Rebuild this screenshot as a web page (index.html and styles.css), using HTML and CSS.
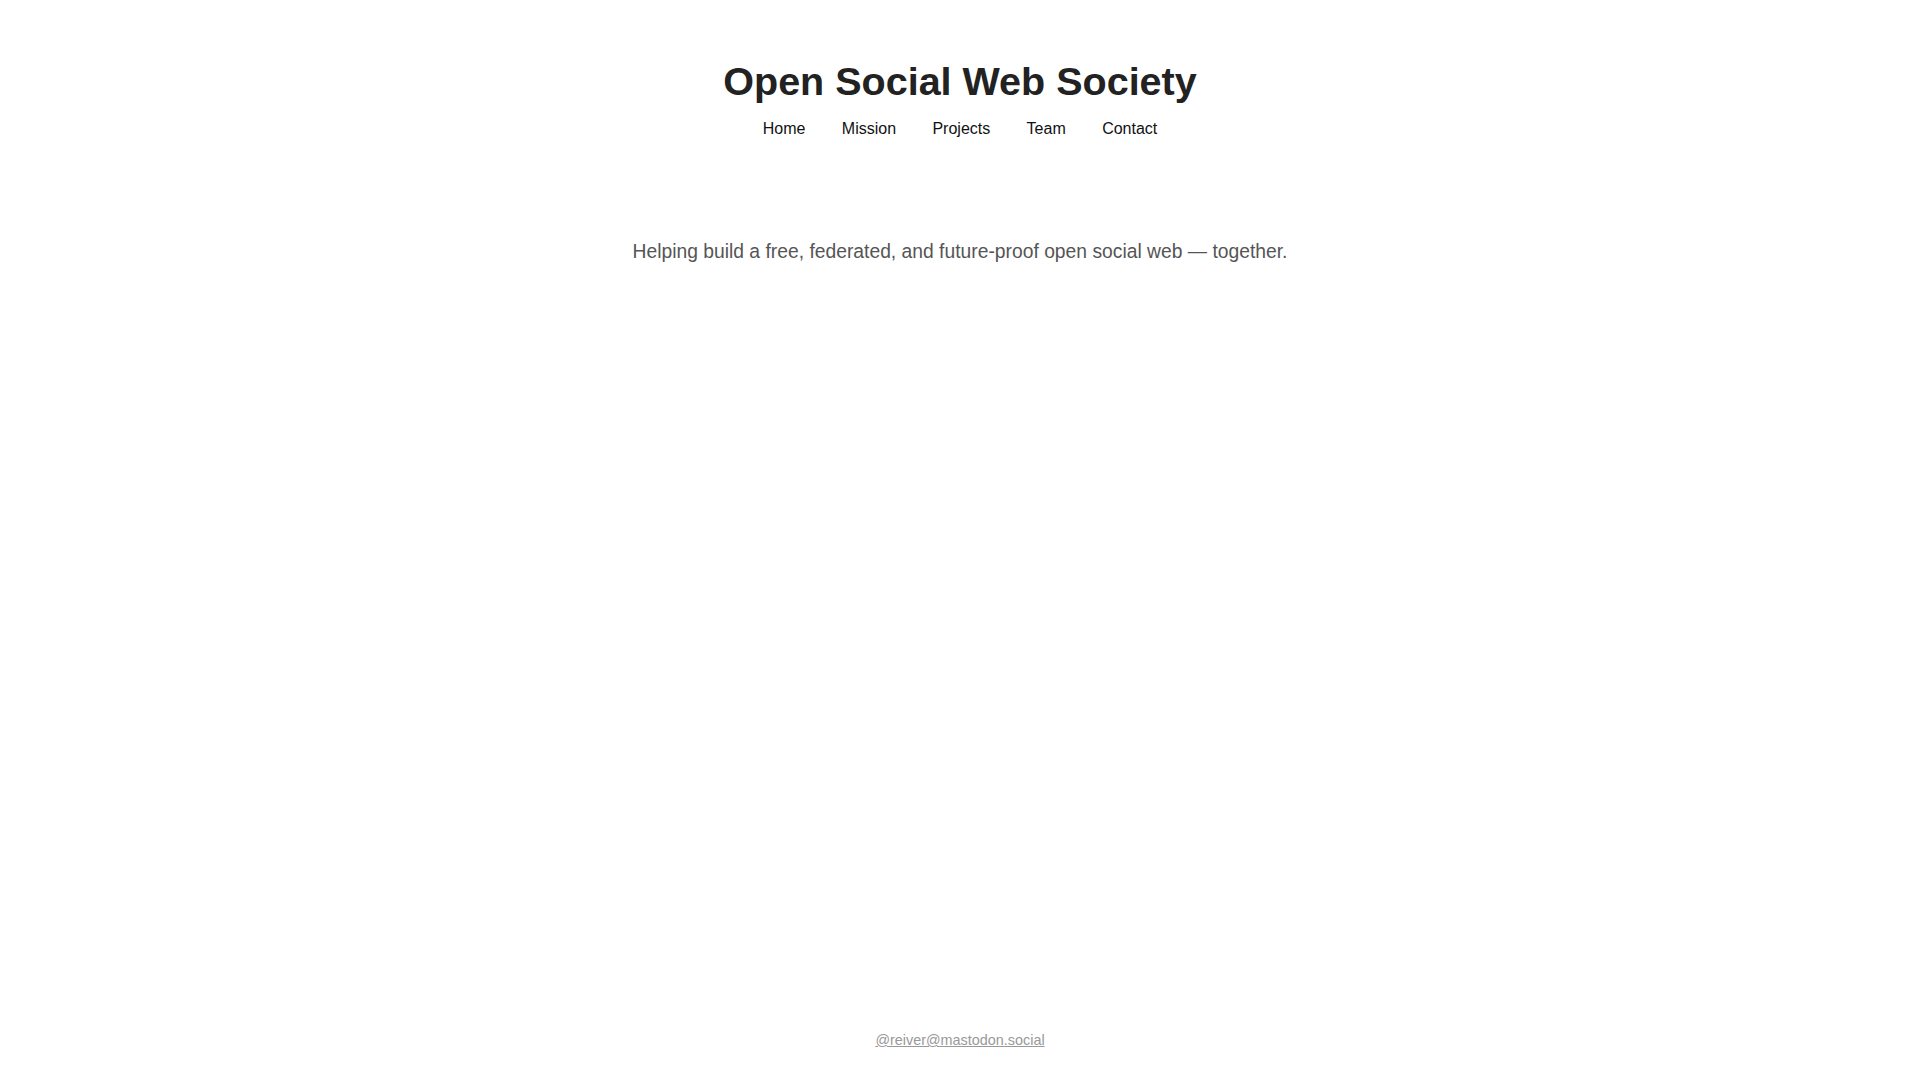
FILE: index.html
```html
<!DOCTYPE html>
<html lang="en">
<head>
<meta charset="utf-8">
<title>Open Social Web Society</title>
<link rel="stylesheet" href="styles.css">
</head>
<body>
<div class="page">
  <header class="site-header">
    <h1 class="site-title">Open Social Web Society</h1>
    <nav class="site-nav">
      <a href="#">Home</a>
      <a href="#">Mission</a>
      <a href="#">Projects</a>
      <a href="#">Team</a>
      <a href="#">Contact</a>
    </nav>
  </header>
  <main class="site-main">
    <p class="tagline">Helping build a free, federated, and future-proof open social web — together.</p>
  </main>
  <footer class="site-footer">
    <a href="#">@reiver@mastodon.social</a>
  </footer>
</div>
</body>
</html>
```

FILE: styles.css
```css
html, body {
  margin: 0;
  padding: 0;
  background: #fff;
}

body {
  font-family: "Liberation Sans", Arial, sans-serif;
  color: #222;
}

.page {
  min-height: 100vh;
  display: flex;
  flex-direction: column;
}

.site-header {
  padding: 59px 0 0;
  text-align: center;
}

.site-title {
  margin: 0 0 16px;
  font-size: 39.5px;
  font-weight: bold;
  color: #222;
  line-height: 45px;
}

.site-nav {
  display: flex;
  justify-content: center;
  gap: 36.4px;
}

.site-nav a {
  font-size: 16px;
  color: #111;
  text-decoration: none;
  line-height: normal;
}

.site-main {
  flex: 1;
  padding-top: 103px;
  text-align: center;
}

.tagline {
  margin: 0;
  font-size: 19.3px;
  color: #555;
  line-height: normal;
}

.site-footer {
  padding: 0 0 32px;
  text-align: center;
  font-size: 14.4px;
  line-height: normal;
}

.site-footer a {
  color: #999;
  text-decoration: underline;
}
```
